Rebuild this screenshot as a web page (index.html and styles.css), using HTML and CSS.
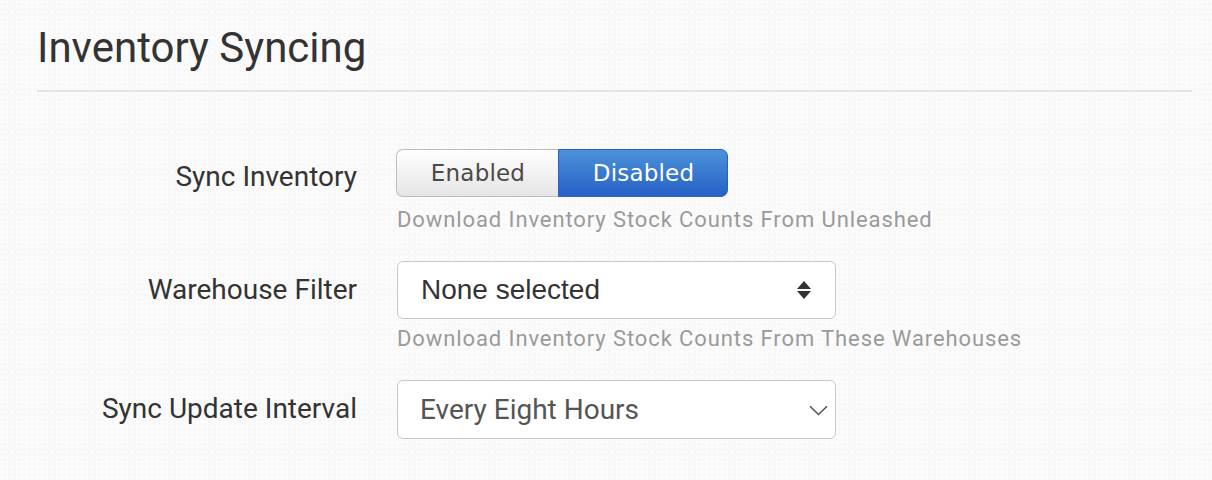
FILE: index.html
```html
<!DOCTYPE html>
<html lang="en">
<head>
<meta charset="utf-8">
<title>Inventory Syncing</title>
<link rel="stylesheet" href="styles.css">
</head>
<body>
<div class="page">
  <h1 class="title">Inventory Syncing</h1>
  <div class="form">
    <div class="row row-toggle">
      <div class="label">Sync Inventory</div>
      <div class="control">
        <div class="toggle">
          <button class="toggle-btn off">Enabled</button>
          <button class="toggle-btn on">Disabled</button>
        </div>
        <div class="help help-toggle">Download Inventory Stock Counts From Unleashed</div>
      </div>
    </div>
    <div class="row">
      <div class="label">Warehouse Filter</div>
      <div class="control">
        <div class="select multi">
          <span class="select-text">None selected</span>
          <svg class="updown" width="16" height="20" viewBox="0 0 16 20"><path d="M8 1 L15 9 L1 9 Z" fill="#333"/><path d="M1 11 L15 11 L8 19 Z" fill="#333"/></svg>
        </div>
        <div class="help">Download Inventory Stock Counts From These Warehouses</div>
      </div>
    </div>
    <div class="row">
      <div class="label">Sync Update Interval</div>
      <div class="control">
        <div class="select single">
          <span class="select-text">Every Eight Hours</span>
          <svg class="chev" width="19" height="11" viewBox="0 0 19 11"><path d="M1 1.2 L9.5 9.5 L18 1.2" fill="none" stroke="#555" stroke-width="1.6"/></svg>
        </div>
      </div>
    </div>
  </div>
</div>
</body>
</html>
```
FILE: styles.css
```css
html, body {
  margin: 0;
  padding: 0;
}
body {
  background-color: #f9f9f9;
  background-image: radial-gradient(circle at 2px 2px, #ffffff 1px, transparent 1.4px);
  background-size: 5px 5px;
  font-family: Roboto, "Liberation Sans", sans-serif;
  color: #333;
  width: 1212px;
  height: 480px;
  overflow: hidden;
}
.page {
  padding: 23px 20px 0 37px;
}
.title {
  margin: 0;
  font-size: 42px;
  font-weight: 400;
  line-height: 50px;
  color: #333;
  padding-bottom: 17px;
  border-bottom: 2px solid #e3e3e3;
}
.form {
  padding-top: 57px;
  display: flex;
  flex-direction: column;
  gap: 26px;
}
.row {
  display: grid;
  grid-template-columns: 320px 1fr;
  column-gap: 40px;
  align-items: start;
}
.label {
  text-align: right;
  font-size: 28px;
  line-height: 34px;
  padding-top: 12px;
  color: #333;
}
.row-toggle .label {
  padding-top: 11px;
}
.control {
  display: flex;
  flex-direction: column;
  align-items: flex-start;
}
.toggle {
  display: flex;
  margin-left: -1px;
  height: 48px;
}
.toggle-btn {
  font-family: "DejaVu Sans", Verdana, sans-serif;
  font-size: 23px;
  height: 48px;
  padding: 0 32px 0 33px;
  margin: 0;
  cursor: pointer;
  letter-spacing: 0.2px;
}
.toggle-btn.off {
  color: #4a4a4a;
  background: linear-gradient(#ffffff, #e5e5e5);
  border: 1px solid #bdbdbd;
  border-right: none;
  border-radius: 7px 0 0 7px;
  width: 162px;
}
.toggle-btn.on {
  color: #fff;
  background: linear-gradient(#4a93d8, #2760c7);
  border: 1px solid #2b60c4;
  border-radius: 0 7px 7px 0;
  width: 170px;
}
.help {
  font-size: 22px;
  letter-spacing: 0.9px;
  line-height: 31px;
  color: #9a9a9a;
  margin-top: 4px;
}
.help-toggle {
  margin-top: 7px;
}
.select {
  box-sizing: border-box;
  width: 439px;
  background: #fff;
  border: 1px solid #c8c8c8;
  border-radius: 6px;
  display: flex;
  align-items: center;
  justify-content: space-between;
}
.select.multi {
  height: 58px;
  padding: 0 23px 0 23px;
}
.select.multi .select-text {
  font-family: "Liberation Sans", Arial, sans-serif;
  font-size: 28px;
  color: #333;
}
.select.single {
  height: 59px;
  padding: 0 7px 0 22px;
}
.select.single .select-text {
  font-size: 28px;
  color: #555;
}
.updown {
  display: block;
}
.chev {
  display: block;
  margin-top: 1px;
}
```
